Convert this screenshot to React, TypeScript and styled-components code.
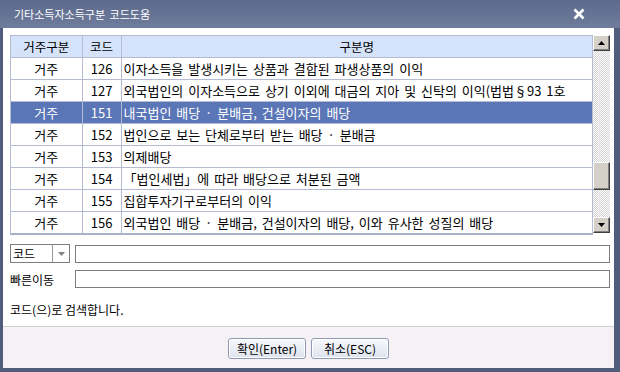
import styled, { createGlobalStyle } from "styled-components";

const GlobalStyle = createGlobalStyle`
  html, body {
    margin: 0;
    padding: 0;
    background: #ffffff;
  }
  * {
    box-sizing: border-box;
  }
`;

const FONT = `"Noto Sans CJK KR", "Noto Sans", sans-serif`;

type Row = { kind: string; code: number; name: string };

const ROWS: Row[] = [
  { kind: "거주", code: 126, name: "이자소득을 발생시키는 상품과 결합된 파생상품의 이익" },
  { kind: "거주", code: 127, name: "외국법인의 이자소득으로 상기 이외에 대금의 지아 및 신탁의 이익(법법§93 1호" },
  { kind: "거주", code: 151, name: "내국법인 배당 · 분배금, 건설이자의 배당" },
  { kind: "거주", code: 152, name: "법인으로 보는 단체로부터 받는 배당 · 분배금" },
  { kind: "거주", code: 153, name: "의제배당" },
  { kind: "거주", code: 154, name: "「법인세법」에 따라 배당으로 처분된 금액" },
  { kind: "거주", code: 155, name: "집합투자기구로부터의 이익" },
  { kind: "거주", code: 156, name: "외국법인 배당 · 분배금, 건설이자의 배당, 이와 유사한 성질의 배당" },
];

const SELECTED = 151;

const Window = styled.div`
  width: 620px;
  height: 372px;
  display: flex;
  flex-direction: column;
  background: #4f5c7c;
  font-family: ${FONT};
  font-size: 12px;
  color: #000;
`;

const TitleBar = styled.div`
  height: 28px;
  flex: none;
  display: flex;
  align-items: center;
  justify-content: space-between;
  padding: 0 35px 0 14px;
  background: linear-gradient(#5c6a8c, #6f7c9c);
  color: #fff;
  font-size: 11px;
  word-spacing: 2px;
`;

const CloseIcon = () => (
  <svg width="12" height="12" viewBox="0 0 12 12">
    <path d="M1.5 1.5 L10.5 10.5 M10.5 1.5 L1.5 10.5" stroke="#fff" strokeWidth="2.6" />
  </svg>
);

const Body = styled.div`
  flex: 1;
  margin: 0 6px 4px 3px;
  background: #fff;
  display: flex;
  flex-direction: column;
`;

const Content = styled.div`
  padding: 7px 4px 0 7px;
  display: flex;
  flex-direction: column;
`;

const GridWrap = styled.div`
  display: flex;
  height: 200px;
`;

const GridArea = styled.div`
  flex: 1;
  overflow: hidden;
  border-left: 1px solid #b4bbd3;
  border-bottom: 2px solid #a9b1c7;
`;

const Table = styled.table`
  width: 100%;
  table-layout: fixed;
  border-collapse: collapse;
  font-size: 13px;
  word-spacing: 2px;
`;

const HeadCell = styled.th<{ $w?: number }>`
  width: ${(p) => (p.$w ? `${p.$w}px` : "auto")};
  height: 22px;
  padding: 0;
  background: #d5e3fa;
  border-right: 1px solid #b4bbd3;
  border-top: 1px solid #b4bbd3;
  border-bottom: 1px solid #b4bbd3;
  font-weight: normal;
  font-size: 12.5px;
  text-align: center;
`;

const DataRow = styled.tr<{ $selected: boolean }>`
  background: ${(p) => (p.$selected ? "#5a76b7" : "#fff")};
  color: ${(p) => (p.$selected ? "#fff" : "#000")};
`;

const Cell = styled.td<{ $align: "left" | "center" | "right" }>`
  height: 22px;
  padding: 0 ${(p) => (p.$align === "right" ? "8px" : "2px")} 0 2px;
  border-right: 1px solid #b4bbd3;
  border-bottom: 1px solid #b4bbd3;
  text-align: ${(p) => p.$align};
  white-space: nowrap;
  overflow: hidden;
`;

const Scrollbar = styled.div`
  width: 17px;
  height: 198px;
  display: flex;
  flex-direction: column;
  background-color: #fff;
  background-image: repeating-conic-gradient(#d4d4d4 0 25%, #fff 0 50%);
  background-size: 2px 2px;
`;

const ScrollButton = styled.div`
  height: 16px;
  flex: none;
  display: flex;
  align-items: center;
  justify-content: center;
  background: #d4d0c8;
  border: 1px solid;
  border-color: #fff #404040 #404040 #fff;
  box-shadow: inset -1px -1px 0 #808080;
`;

const Track = styled.div`
  flex: 1;
  display: flex;
  flex-direction: column;
`;

const Thumb = styled.div`
  margin-top: 111px;
  height: 28px;
  background: #d4d0c8;
  border: 1px solid;
  border-color: #fff #404040 #404040 #fff;
  box-shadow: inset -1px -1px 0 #808080;
`;

const Arrow = ({ up }: { up?: boolean }) => (
  <svg width="7" height="4" viewBox="0 0 7 4">
    <path d={up ? "M0 4 L3.5 0 L7 4 Z" : "M0 0 L3.5 4 L7 0 Z"} fill="#000" />
  </svg>
);

const FieldRow = styled.div<{ $top: number }>`
  display: flex;
  align-items: center;
  gap: 5px;
  margin-top: ${(p) => p.$top}px;
`;

const Select = styled.div`
  width: 60px;
  height: 19px;
  display: flex;
  border: 1px solid #7d7d7d;
  background: #fff;
`;

const SelectText = styled.div`
  flex: 1;
  padding-left: 2px;
  line-height: 17px;
`;

const SelectArrow = styled.div`
  width: 17px;
  display: flex;
  align-items: center;
  justify-content: center;
  border-left: 1px solid #9a9a9a;
`;

const Label = styled.div`
  width: 60px;
`;

const Input = styled.div`
  flex: 1;
  height: 18px;
  border: 1px solid #7d7d7d;
  background: #fff;
`;

const Status = styled.div`
  margin-top: 13px;
`;

const Footer = styled.div`
  margin-top: auto;
  height: 42px;
  border-top: 1px solid #cfcdd2;
  background: #f5f1f5;
  display: flex;
  justify-content: center;
  align-items: flex-start;
  gap: 5px;
  padding-top: 11px;
`;

const Button = styled.button`
  width: 78px;
  height: 21px;
  padding: 0;
  font-family: ${FONT};
  font-size: 12px;
  color: #000;
  border: 1px solid #8e9ab4;
  border-radius: 3px;
  background: linear-gradient(#f6f8fc, #dde3ee);
  box-shadow: inset 0 0 0 1px #fff;
`;

export default function App() {
  return (
    <>
      <GlobalStyle />
      <Window>
        <TitleBar>
          <span>기타소득자소득구분 코드도움</span>
          <CloseIcon />
        </TitleBar>
        <Body>
          <Content>
            <GridWrap>
              <GridArea>
                <Table>
                  <thead>
                    <tr>
                      <HeadCell $w={71}>거주구분</HeadCell>
                      <HeadCell $w={39}>코드</HeadCell>
                      <HeadCell>구분명</HeadCell>
                    </tr>
                  </thead>
                  <tbody>
                    {ROWS.map((r) => (
                      <DataRow key={r.code} $selected={r.code === SELECTED}>
                        <Cell $align="center">{r.kind}</Cell>
                        <Cell $align="right">{r.code}</Cell>
                        <Cell $align="left">{r.name}</Cell>
                      </DataRow>
                    ))}
                  </tbody>
                </Table>
              </GridArea>
              <Scrollbar>
                <ScrollButton>
                  <Arrow up />
                </ScrollButton>
                <Track>
                  <Thumb />
                </Track>
                <ScrollButton>
                  <Arrow />
                </ScrollButton>
              </Scrollbar>
            </GridWrap>

            <FieldRow $top={9}>
              <Select>
                <SelectText>코드</SelectText>
                <SelectArrow>
                  <svg width="7" height="4" viewBox="0 0 7 4">
                    <path d="M0 0 L3.5 4 L7 0 Z" fill="#808080" />
                  </svg>
                </SelectArrow>
              </Select>
              <Input />
            </FieldRow>
            <FieldRow $top={7}>
              <Label>빠른이동</Label>
              <Input />
            </FieldRow>
            <Status>코드(으)로 검색합니다.</Status>
          </Content>
          <Footer>
            <Button>확인(Enter)</Button>
            <Button>취소(ESC)</Button>
          </Footer>
        </Body>
      </Window>
    </>
  );
}
